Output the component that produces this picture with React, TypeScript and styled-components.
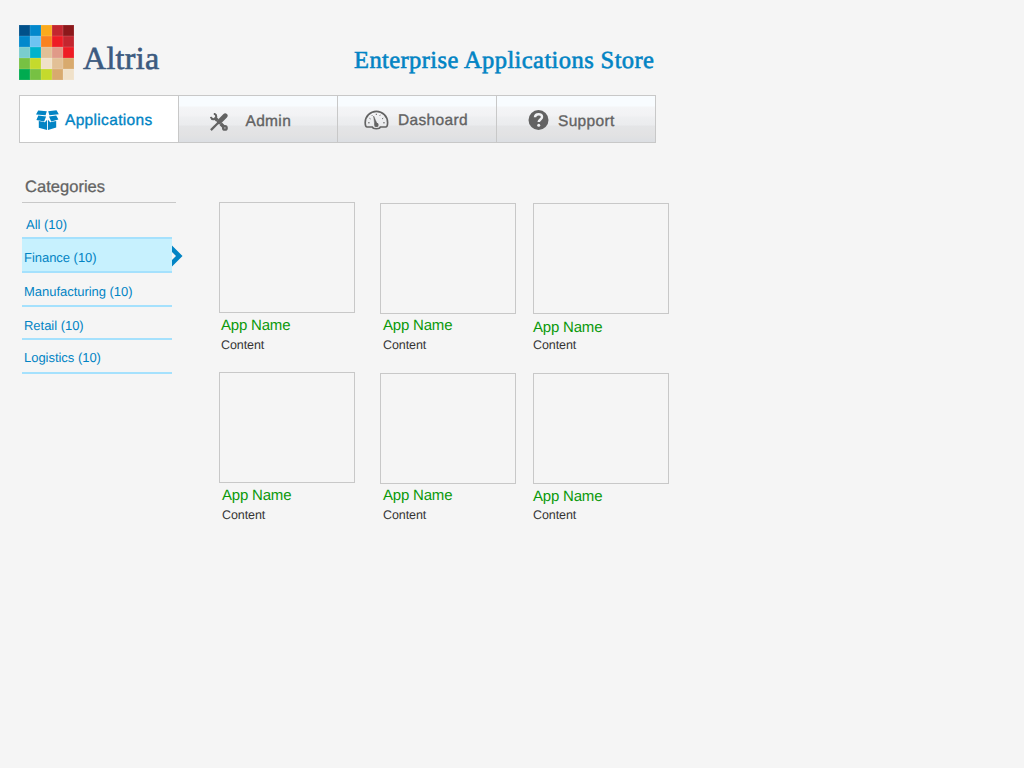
import React from "react";
import styled, { createGlobalStyle } from "styled-components";

const GlobalStyle = createGlobalStyle`
  * { box-sizing: border-box; }
  body {
    margin: 0;
    background: #f5f5f5;
    font-family: "Liberation Sans", Arial, sans-serif;
    text-rendering: geometricPrecision;
  }
`;

const Page = styled.div`
  width: 1024px;
  min-height: 768px;
  padding: 25px 0 0 19px;
`;

const Header = styled.header`
  display: flex;
  align-items: flex-start;
  height: 70px;
`;

const Mosaic = styled.div`
  display: grid;
  grid-template-columns: repeat(5, 11px);
  grid-auto-rows: 11px;
`;

const Tile = styled.span<{ $color: string }>`
  background: ${(p) => p.$color};
  box-shadow: inset 0 0 0 0.5px rgba(255, 255, 255, 0.16);
`;

const Brand = styled.div`
  width: 271px;
  padding: 17px 0 0 9px;
  font: 32px/32px "Liberation Serif", "Times New Roman", serif;
  letter-spacing: 0.3px;
  color: #3c5a7f;
  -webkit-text-stroke: 0.6px #3c5a7f;
`;

const Title = styled.h1`
  margin: 22px 0 0 9px;
  font: 24.5px/28px "Liberation Serif", "Times New Roman", serif;
  letter-spacing: 0.41px;
  color: #0284c4;
  -webkit-text-stroke: 0.6px #0284c4;
  white-space: nowrap;
`;

const Nav = styled.nav`
  display: flex;
  width: 637px;
  height: 48px;
  border: 1px solid #c8c8c8;
`;

const Tab = styled.a<{ $active?: boolean; $inset: number }>`
  display: flex;
  align-items: flex-start;
  width: 159px;
  padding-left: ${(p) => p.$inset}px;
  color: ${(p) => (p.$active ? "#0284c4" : "#636363")};
  background: ${(p) =>
    p.$active
      ? "#fff"
      : "linear-gradient(#f8fcff 0, #f8fcff 10px, #f4f5f7 11px, #f2f2f4 20px, #eeeff1 21px, #ebecee 29px, #e4e5e7 30px, #e2e2e3 39px, #dcdfe3 46px)"};
  &:not(:last-child) { border-right: 1px solid #c8c8c8; }
  &:last-child { width: 158px; }
  svg { flex: none; display: block; }
`;

const TabIcon = styled.span<{ $top: number; $width: number }>`
  flex: none;
  width: ${(p) => p.$width}px;
  margin-top: ${(p) => p.$top}px;
`;

const TabLabel = styled.span<{ $top: number }>`
  margin-top: ${(p) => p.$top}px;
  font-size: 15.5px;
  line-height: 20px;
  letter-spacing: 0.33px;
  -webkit-text-stroke: 0.35px currentColor;
`;

const Main = styled.main`
  display: flex;
  align-items: flex-start;
`;

const Sidebar = styled.aside`
  width: 157px;
  margin-right: 43px;
  padding: 34px 0 0 3px;
`;

const SidebarTitle = styled.h2`
  height: 26px;
  margin: 0;
  padding-left: 3px;
  border-bottom: 1px solid #c8c8c8;
  font-size: 16.5px;
  font-weight: 400;
  line-height: 20px;
  letter-spacing: 0.03px;
  color: #636363;
  -webkit-text-stroke: 0.3px #636363;
`;

const Category = styled.a<{ $height: number; $top: number; $kind?: "plain" | "active" }>`
  position: relative;
  display: block;
  width: 150px;
  height: ${(p) => p.$height}px;
  padding: ${(p) => p.$top}px 0 0 ${(p) => (p.$kind === "plain" ? 4 : 2)}px;
  border-bottom: ${(p) => (p.$kind === "plain" ? 0 : 2)}px solid #a5e1fd;
  border-top: ${(p) => (p.$kind === "active" ? 2 : 0)}px solid #a5e1fd;
  background: ${(p) => (p.$kind === "active" ? "#c7f1fe" : "transparent")};
  font-size: 13px;
  line-height: 20px;
  letter-spacing: -0.03px;
  color: #0284c4;
`;

const Pointer = styled.svg`
  position: absolute;
  left: 150px;
  top: 6px;
`;

const Catalog = styled.section`
  display: flex;
  padding-top: 59px;
`;

const Column = styled.div<{ $gap: number; $top: number }>`
  width: 136px;
  margin-right: ${(p) => p.$gap}px;
  padding-top: ${(p) => p.$top}px;
`;

const Card = styled.article`
  height: 170px;
`;

const Thumb = styled.div`
  height: 111px;
  border: 1px solid #c8c8c8;
`;

const Caption = styled.div<{ $inset: number; $top: number }>`
  display: flex;
  flex-direction: column;
  padding-left: ${(p) => p.$inset}px;
  padding-top: ${(p) => p.$top}px;
`;

const AppName = styled.h3`
  margin: 0;
  font-size: 15px;
  font-weight: 400;
  line-height: 20px;
  letter-spacing: -0.2px;
  color: #0a990a;
`;

const Content = styled.p<{ $gap: number }>`
  margin: ${(p) => p.$gap}px 0 0;
  font-size: 12.5px;
  line-height: 16px;
  letter-spacing: -0.08px;
  color: #333;
`;

const tiles = [
  "#00508a", "#0288cc", "#fbaa1d", "#c3262f", "#8c181b",
  "#0288cc", "#6dc4f2", "#f98220", "#ee1c25", "#c3262f",
  "#7acdce", "#00b3cb", "#e2c096", "#e09a88", "#ee1c25",
  "#77c143", "#c5da2c", "#f0e1c9", "#e2c096", "#d8aa6e",
  "#00ab50", "#77c143", "#c5da2c", "#d8aa6e", "#f0e1c9",
];

const BoxIcon = () => (
  <svg width="23" height="21" viewBox="0 0 23 21" fill="currentColor">
    <path d="M2.2.4 10.800 1.300 9.600 5.300 0 4.500zM12.200 1.300 20.500.2 22.800 4.200l-9.400 1.100zM2.300 5.500l7.800 1-2 4.900L.4 9.900zM13 6.500l7.200-1 2.200 4.100-7.200 1.900zM2.800 11l6.100 1.300 2.200-2.500v10.100l-8.300-2.200zM12 9.800l2.200 2.500 6-1.200v6.500L12 19.900z" />
  </svg>
);

const ToolsIcon = () => (
  <svg width="18" height="18" viewBox="0 0 18 18" fill="none" stroke="currentColor">
    <path d="M.9 17.100 10 8" strokeWidth="2.200" />
    <path d="M9.300 8.700l5.900-5.900" strokeWidth="4.800" strokeLinecap="round" />
    <path d="M4.500 4.500l3 3M10.700 10.700l3.500 3.500" strokeWidth="3.500" />
    <path d="M3.800.8A2.700 2.700 0 1 1 .9 3.900" strokeWidth="2" />
    <circle cx="14.900" cy="14.900" r="1.800" strokeWidth="2.300" />
  </svg>
);

const GaugeIcon = () => (
  <svg width="25" height="20" viewBox="0 0 25 20" fill="none" stroke="currentColor">
    <path d="M8.300 17H3.200C1.700 17 1.200 15 1.200 12.500a11.200 11.200 0 0 1 22.400 0c0 2.500-.5 4.500-2 4.500h-5.200c-.9 2.300-7.200 2.300-8.100 0z" strokeWidth="1.700" />
    <path d="M9.600 6 10.700 14.400 13 13.600z" fill="currentColor" strokeWidth=".5" />
    <circle cx="12.400" cy="14.900" r="2.200" fill="currentColor" stroke="none" />
    <path d="M4 12.800h1.700M19.100 12.800h1.700M5.500 8.300l1 .6M8 5.300l.4.700M12.300 3.700v1.300M16.300 4.800l-.5.900M19.200 8.200l-1.100.7" strokeWidth="1" />
  </svg>
);

const HelpIcon = () => (
  <svg width="21" height="21" viewBox="0 0 21 21">
    <circle cx="10.500" cy="10" r="10" fill="currentColor" />
    <path d="M7 7.300C7.200 3.100 14 3.300 14 6.900c0 2.500-3.300 2.600-3.300 5.200" fill="none" stroke="#f0f1f3" strokeWidth="2.500" />
    <circle cx="10.700" cy="15.200" r="1.500" fill="#f0f1f3" />
  </svg>
);

const tabs = [
  { label: "Applications", Icon: BoxIcon, inset: 15.5, iconTop: 14, iconWidth: 29.5, top: 15, active: true },
  { label: "Admin", Icon: ToolsIcon, inset: 31, iconTop: 17, iconWidth: 35.5, top: 16 },
  { label: "Dashoard", Icon: GaugeIcon, inset: 26, iconTop: 14, iconWidth: 34, top: 15 },
  { label: "Support", Icon: HelpIcon, inset: 31, iconTop: 14, iconWidth: 30, top: 16 },
];

const categories: { label: string; height: number; top: number; kind?: "plain" | "active" }[] = [
  { label: "All (10)", height: 34, top: 12, kind: "plain" },
  { label: "Finance (10)", height: 36, top: 9, kind: "active" },
  { label: "Manufacturing (10)", height: 34, top: 9 },
  { label: "Retail (10)", height: 33, top: 9 },
  { label: "Logistics (10)", height: 34, top: 8 },
];

const columns = [
  { gap: 25, top: 0, cards: [{ inset: 2, top: 3, gap: 1 }, { inset: 3, top: 3, gap: 1 }] },
  { gap: 17, top: 1, cards: [{ inset: 3, top: 2, gap: 1 }, { inset: 3, top: 2, gap: 1 }] },
  { gap: 0, top: 1, cards: [{ inset: 0, top: 4, gap: -1 }, { inset: 0, top: 3, gap: 0 }] },
];

export default function App() {
  return (
    <>
      <GlobalStyle />
      <Page>
        <Header>
          <Mosaic>
            {tiles.map((color, i) => (
              <Tile key={i} $color={color} />
            ))}
          </Mosaic>
          <Brand>Altria</Brand>
          <Title>Enterprise Applications Store</Title>
        </Header>
        <Nav>
          {tabs.map(({ label, Icon, inset, iconTop, iconWidth, top, active }) => (
            <Tab key={label} $active={active} $inset={inset}>
              <TabIcon $top={iconTop} $width={iconWidth}>
                <Icon />
              </TabIcon>
              <TabLabel $top={top}>{label}</TabLabel>
            </Tab>
          ))}
        </Nav>
        <Main>
          <Sidebar>
            <SidebarTitle>Categories</SidebarTitle>
            {categories.map(({ label, height, top, kind }) => (
              <Category key={label} $height={height} $top={top} $kind={kind}>
                {label}
                {kind === "active" && (
                  <Pointer width="11" height="22" viewBox="0 0 11 22">
                    <path d="M0 .5l10.500 10.500L0 21.500v-6.500L4 11 0 7z" fill="#0284c4" />
                  </Pointer>
                )}
              </Category>
            ))}
          </Sidebar>
          <Catalog>
            {columns.map((column, i) => (
              <Column key={i} $gap={column.gap} $top={column.top}>
                {column.cards.map((card, j) => (
                  <Card key={j}>
                    <Thumb />
                    <Caption $inset={card.inset} $top={card.top}>
                      <AppName>App Name</AppName>
                      <Content $gap={card.gap}>Content</Content>
                    </Caption>
                  </Card>
                ))}
              </Column>
            ))}
          </Catalog>
        </Main>
      </Page>
    </>
  );
}
